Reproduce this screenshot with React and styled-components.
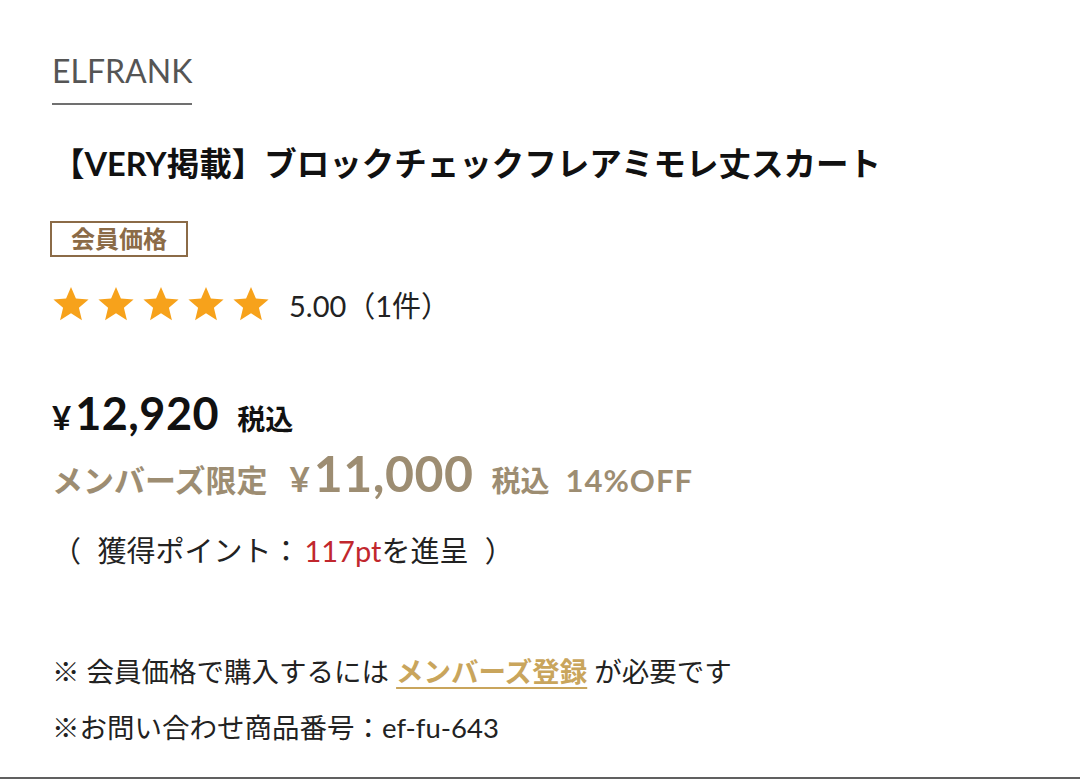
import styled, { createGlobalStyle } from "styled-components";

const GlobalStyle = createGlobalStyle`
  html, body {
    margin: 0;
    padding: 0;
    background: #fff;
  }
  body {
    font-family: Lato, "Noto Sans CJK JP", sans-serif;
    color: #1a1a1a;
  }
`;

const Page = styled.div`
  box-sizing: border-box;
  min-height: 779px;
  padding: 51px 52px 0;
  border-bottom: 2px solid #606060;
  display: flex;
  flex-direction: column;
  align-items: flex-start;
`;

const Brand = styled.div`
  display: inline-block;
  font-size: 32px;
  line-height: 40px;
  color: #555;
  padding-bottom: 12px;
  border-bottom: 2px solid #707070;
`;

const Title = styled.h1`
  margin: 39px 0 0;
  font-size: 32.5px;
  line-height: 40px;
  font-weight: 700;
  color: #111;
`;

const Badge = styled.div`
  margin: 37px 0 0 -2px;
  box-sizing: border-box;
  height: 36px;
  padding: 0 19px;
  border: 2px solid #8b6b47;
  color: #8b6b47;
  font-size: 24px;
  line-height: 32px;
  font-weight: 700;
`;

const Rating = styled.div`
  margin-top: 29px;
  height: 36px;
  display: flex;
  align-items: center;
  gap: 7px;
`;

const RatingText = styled.span`
  margin-left: 12px;
  font-size: 29px;
  color: #222;
`;

const PriceRow = styled.div`
  margin-top: ${(p) => p.$top}px;
  display: flex;
  align-items: baseline;
  color: ${(p) => p.$color || "#111"};
  font-weight: 700;
  line-height: ${(p) => p.$lh}px;
`;

const Yen = styled.span`
  font-size: ${(p) => p.$size}px;
  margin-right: 4px;
`;

const Amount = styled.span`
  font-size: ${(p) => p.$size}px;
  letter-spacing: 0.5px;
`;

const Label = styled.span`
  font-size: ${(p) => p.$size}px;
  margin: ${(p) => p.$margin || "0"};
  letter-spacing: ${(p) => p.$spacing || 0}px;
`;

const Points = styled.div`
  margin-top: 22px;
  font-size: 29px;
  line-height: 40px;
  color: #222;
  white-space: pre;
  word-spacing: 9px;
`;

const Red = styled.span`
  color: #c1272d;
  margin-left: 4px;
`;

const Note = styled.div`
  margin-top: ${(p) => p.$top}px;
  font-size: 27.5px;
  line-height: 40px;
  color: #222;
  white-space: pre;
`;

const MemberLink = styled.a`
  color: #c9a55c;
  font-weight: 700;
  text-decoration: underline;
  text-decoration-thickness: 2px;
  text-underline-offset: 5px;
`;

const Star = () => (
  <svg width="38" height="38" viewBox="0 0 24 24">
    <path
      fill="#f7a21b"
      d="M12 1.2l3.1 7.4 8 .6-6.1 5.2 1.9 7.8L12 17.9l-6.9 4.3 1.9-7.8L.9 9.2l8-.6z"
    />
  </svg>
);

export default function App() {
  return (
    <>
      <GlobalStyle />
      <Page>
        <Brand>ELFRANK</Brand>
        <Title>【VERY掲載】ブロックチェックフレアミモレ丈スカート</Title>
        <Badge>会員価格</Badge>
        <Rating>
          {[0, 1, 2, 3, 4].map((i) => (
            <Star key={i} />
          ))}
          <RatingText>5.00（1件）</RatingText>
        </Rating>
        <PriceRow $top={66} $lh={50}>
          <Yen $size={33}>¥</Yen>
          <Amount $size={45}>12,920</Amount>
          <Label $size={28} $margin="0 0 0 18px">税込</Label>
        </PriceRow>
        <PriceRow $top={1} $lh={56} $color="#9d8d72">
          <Label $size={31} $margin="0 22px 0 0">メンバーズ限定</Label>
          <Yen $size={35}>¥</Yen>
          <Amount $size={50}>11,000</Amount>
          <Label $size={29} $margin="0 0 0 18px">税込</Label>
          <Label $size={31} $margin="0 0 0 16px" $spacing={1}>14%OFF</Label>
        </PriceRow>
        <Points>
          （ 獲得ポイント：<Red>117pt</Red>を進呈 ）
        </Points>
        <Note $top={81}>
          ※ 会員価格で購入するには <MemberLink href="#">メンバーズ登録</MemberLink> が必要です
        </Note>
        <Note $top={16}>※お問い合わせ商品番号：ef-fu-643</Note>
      </Page>
    </>
  );
}
